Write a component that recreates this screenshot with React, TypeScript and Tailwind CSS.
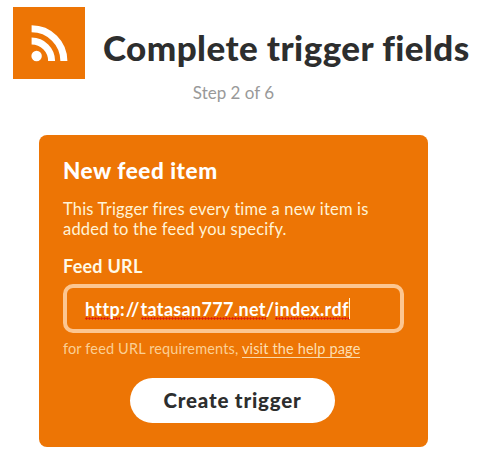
import type { ReactNode } from 'react';

function FeedIcon() {
  return (
    <div className="size-[72px] shrink-0 bg-[#ed7505]">
      <svg viewBox="0 0 72 72" className="size-full" fill="none" stroke="#fff" aria-hidden="true">
        <circle cx="23.6" cy="49" r="5.2" fill="#fff" stroke="none" />
        <path d="M18.6 34A20 20 0 0 1 38.6 54" strokeWidth="7" />
        <path d="M18.6 21.7A32.3 32.3 0 0 1 50.9 54" strokeWidth="7" />
      </svg>
    </div>
  );
}

// Word flagged by the spell checker
function Misspelled({ children }: { children: ReactNode }) {
  return (
    <span className="bg-[radial-gradient(circle,#e0200c_0.9px,transparent_1.5px)] bg-[length:3px_3px] bg-[position:0_bottom] bg-repeat-x">
      {children}
    </span>
  );
}

export default function App() {
  return (
    <div className="min-h-[475px] w-[480px] overflow-hidden bg-white font-['Lato',sans-serif] text-[#2d2e2e] [font-variant-ligatures:none]">
      <header className="flex gap-[18px] pt-[7px] pl-[13px]">
        <FeedIcon />
        <h1 className="mt-5 text-[35px] leading-10 font-black tracking-[0.43px] whitespace-nowrap">Complete trigger fields</h1>
      </header>
      <p className="mt-1 w-[467px] text-center text-[17px] leading-5 text-[#999]">Step 2 of 6</p>

      <main className="mt-8 ml-[39px] w-[389px] rounded-lg bg-[#ed7505] px-6 pt-6 pb-6 text-white">
        <h2 className="text-[22.5px] leading-6 font-black tracking-[0.55px] whitespace-nowrap">New feed item</h2>
        <p className="mt-4 text-[16.5px] leading-5 tracking-[0.19px] whitespace-nowrap text-[#fff3d6]">
          This Trigger fires every time a new item is
          <br />
          added to the feed you specify.
        </p>

        <div className="mt-[17px] text-[18px] leading-5 font-bold tracking-[0.25px] text-[#fffae8]">Feed URL</div>
        <div className="mt-2 flex h-[49px] w-[341px] items-center rounded-[10px] border-4 border-[#fcc691] pl-[18px]">
          <span className="text-[18px] leading-5 font-bold tracking-[0.33px] whitespace-nowrap">
            <Misspelled>http</Misspelled>
            <span className="tracking-[1.1px]">://</span>
            <Misspelled>tatasan777.net</Misspelled>/<Misspelled>index.rdf</Misspelled>
          </span>
          <span className="h-[21px] w-px bg-[#fff3d6]" />
        </div>
        <p className="mt-2 text-[14.5px] leading-4 tracking-[0.15px] whitespace-nowrap text-[#fbcf94]">
          for feed URL requirements, <a className="border-b border-[#fbd9a8] text-[#fddfb0]">visit the help page</a>
        </p>

        <button className="mt-[21px] ml-[67px] block h-[45px] w-[205px] rounded-full bg-white pb-0.5 text-[20.5px] leading-6 font-black tracking-[0.8px] whitespace-nowrap text-[#2d2e2e]">
          Create trigger
        </button>
      </main>
    </div>
  );
}
